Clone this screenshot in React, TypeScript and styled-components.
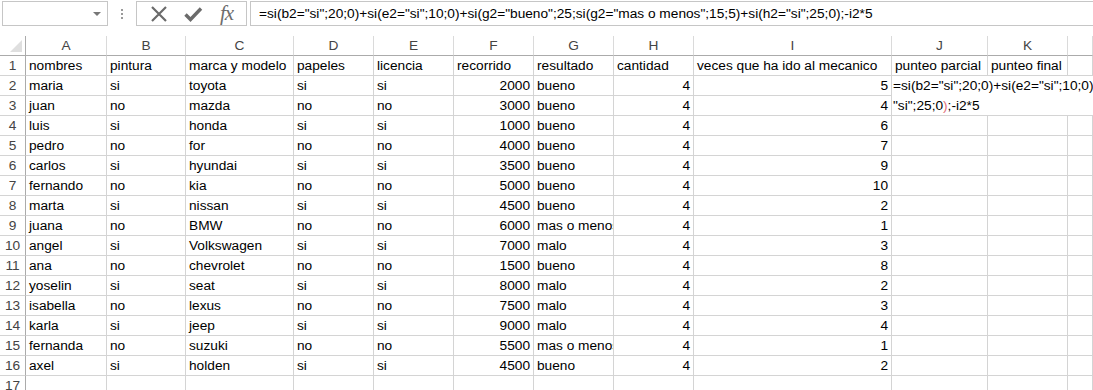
import { Fragment } from "react";
import styled, { createGlobalStyle } from "styled-components";

const GlobalStyle = createGlobalStyle`
  body {
    margin: 0;
    background: #fff;
    font-family: "Liberation Sans", Arial, sans-serif;
    overflow: hidden;
  }
`;

const Page = styled.div`
  width: 1093px;
  height: 390px;
  overflow: hidden;
  background: #fff;
`;

const FormulaBar = styled.div`
  display: flex;
  align-items: stretch;
  height: 25px;
  padding: 1px 0 0 2px;
`;

const NameBox = styled.div`
  box-sizing: border-box;
  width: 106px;
  border: 1px solid #c6c6c6;
  display: flex;
  align-items: center;
  justify-content: flex-end;
  padding-right: 6px;
`;

const Caret = styled.div`
  width: 0;
  height: 0;
  border-left: 4px solid transparent;
  border-right: 4px solid transparent;
  border-top: 4px solid #777;
`;

const Dots = styled.div`
  width: 28px;
  display: flex;
  flex-direction: column;
  align-items: center;
  justify-content: center;
  gap: 2px;
  span {
    width: 2px;
    height: 2px;
    background: #9a9a9a;
  }
`;

const ButtonBox = styled.div`
  box-sizing: border-box;
  width: 111px;
  border: 1px solid #c6c6c6;
  display: flex;
  align-items: center;
  padding-left: 12px;
  gap: 14px;
`;

const Fx = styled.span`
  font-family: "Liberation Serif", "Times New Roman", serif;
  font-style: italic;
  font-size: 21px;
  color: #6d6d6d;
  margin-left: 3px;
  letter-spacing: -1px;
`;

const FormulaInput = styled.div`
  flex: 1;
  margin-left: 3px;
  border: 1px solid #c6c6c6;
  border-right: none;
  font-size: 13.7px;
  color: #000;
  display: flex;
  align-items: center;
  padding-left: 8px;
  white-space: nowrap;
`;

const SheetWrap = styled.div`
  position: relative;
  margin-top: 10px;
`;

const Grid = styled.div`
  display: grid;
  grid-template-columns: 26px 81px 79px 108px 80px 80px 80px 80px 80px 198px 96px 80px 1fr;
  grid-auto-rows: 20px;
`;

const Cell = styled.div<{ $align?: "left" | "right" }>`
  box-sizing: border-box;
  border-right: 1px solid #d4d4d4;
  border-bottom: 1px solid #d4d4d4;
  font-size: 13.7px;
  line-height: 20px;
  color: #000;
  white-space: nowrap;
  overflow: hidden;
  text-align: ${(p) => p.$align || "left"};
  padding: ${(p) => (p.$align === "right" ? "0 3px 0 0" : "0 0 0 3px")};
`;

const ColHead = styled.div`
  box-sizing: border-box;
  border-right: 1px solid #dadada;
  border-bottom: 1px solid #ababab;
  font-size: 13.7px;
  line-height: 19px;
  color: #444;
  text-align: center;
`;

const RowHead = styled.div`
  box-sizing: border-box;
  border-right: 1px solid #ababab;
  border-bottom: 1px solid #d4d4d4;
  font-size: 13.7px;
  line-height: 20px;
  color: #444;
  text-align: center;
`;

const Corner = styled.div`
  box-sizing: border-box;
  border-right: 1px solid #ababab;
  border-bottom: 1px solid #ababab;
  position: relative;
  &::after {
    content: "";
    position: absolute;
    right: 3px;
    bottom: 3px;
    width: 0;
    height: 0;
    border-left: 12px solid transparent;
    border-bottom: 12px solid #dfdfdf;
  }
`;

const EditBox = styled.div`
  position: absolute;
  left: 892px;
  top: 40px;
  right: 0;
  height: 39px;
  background: #fff;
  font-size: 13.7px;
  line-height: 20px;
  padding-left: 1px;
  white-space: nowrap;
  overflow: hidden;
  color: #000;
`;

const Paren = styled.span`
  color: #e0707a;
`;

const cols = ["A", "B", "C", "D", "E", "F", "G", "H", "I", "J", "K", ""];

const header = [
  "nombres",
  "pintura",
  "marca y modelo",
  "papeles",
  "licencia",
  "recorrido",
  "resultado",
  "cantidad",
  "veces que ha ido al mecanico",
  "punteo parcial",
  "punteo final",
];

const data: [string, string, string, string, string, number, string, number, number][] = [
  ["maria", "si", "toyota", "si", "si", 2000, "bueno", 4, 5],
  ["juan", "no", "mazda", "no", "no", 3000, "bueno", 4, 4],
  ["luis", "si", "honda", "si", "si", 1000, "bueno", 4, 6],
  ["pedro", "no", "for", "no", "no", 4000, "bueno", 4, 7],
  ["carlos", "si", "hyundai", "si", "si", 3500, "bueno", 4, 9],
  ["fernando", "no", "kia", "no", "no", 5000, "bueno", 4, 10],
  ["marta", "si", "nissan", "si", "si", 4500, "bueno", 4, 2],
  ["juana", "no", "BMW", "no", "no", 6000, "mas o menos", 4, 1],
  ["angel", "si", "Volkswagen", "si", "si", 7000, "malo", 4, 3],
  ["ana", "no", "chevrolet", "no", "no", 1500, "bueno", 4, 8],
  ["yoselin", "si", "seat", "si", "si", 8000, "malo", 4, 2],
  ["isabella", "no", "lexus", "no", "no", 7500, "malo", 4, 3],
  ["karla", "si", "jeep", "si", "si", 9000, "malo", 4, 4],
  ["fernanda", "no", "suzuki", "no", "no", 5500, "mas o menos", 4, 1],
  ["axel", "si", "holden", "si", "si", 4500, "bueno", 4, 2],
];

const formula =
  '=si(b2="si";20;0)+si(e2="si";10;0)+si(g2="bueno";25;si(g2="mas o menos";15;5)+si(h2="si";25;0);-i2*5';

const CancelIcon = () => (
  <svg width="20" height="20" viewBox="0 0 20 20">
    <path d="M3 3 L17 17 M17 3 L3 17" stroke="#6b6b6b" strokeWidth="2.2" fill="none" />
  </svg>
);

const CheckIcon = () => (
  <svg width="20" height="20" viewBox="0 0 20 20">
    <path d="M2.5 10.5 L7.5 15.5 L18 4.5" stroke="#6b6b6b" strokeWidth="3.4" fill="none" />
  </svg>
);

export default function App() {
  return (
    <Page>
      <GlobalStyle />
      <FormulaBar>
        <NameBox>
          <Caret />
        </NameBox>
        <Dots>
          <span />
          <span />
          <span />
        </Dots>
        <ButtonBox>
          <CancelIcon />
          <CheckIcon />
          <Fx>fx</Fx>
        </ButtonBox>
        <FormulaInput>{formula}</FormulaInput>
      </FormulaBar>
      <SheetWrap>
        <Grid>
          <Corner />
          {cols.map((c, i) => (
            <ColHead key={"h" + i}>{c}</ColHead>
          ))}
          <RowHead>1</RowHead>
          {header.map((h) => (
            <Cell key={h}>{h}</Cell>
          ))}
          <Cell />
          {data.map((r, i) => (
            <Fragment key={"r" + i}>
              <RowHead>{i + 2}</RowHead>
              <Cell>{r[0]}</Cell>
              <Cell>{r[1]}</Cell>
              <Cell>{r[2]}</Cell>
              <Cell>{r[3]}</Cell>
              <Cell>{r[4]}</Cell>
              <Cell $align="right">{r[5]}</Cell>
              <Cell>{r[6]}</Cell>
              <Cell $align="right">{r[7]}</Cell>
              <Cell $align="right">{r[8]}</Cell>
              <Cell />
              <Cell />
              <Cell />
            </Fragment>
          ))}
          <RowHead>17</RowHead>
          {cols.map((_, i) => (
            <Cell key={"e" + i} />
          ))}
        </Grid>
        <EditBox>
          <div>=si(b2="si";20;0)+si(e2="si";10;0)</div>
          <div>
            "si";25;0<Paren>)</Paren>;-i2*5
          </div>
        </EditBox>
      </SheetWrap>
    </Page>
  );
}
